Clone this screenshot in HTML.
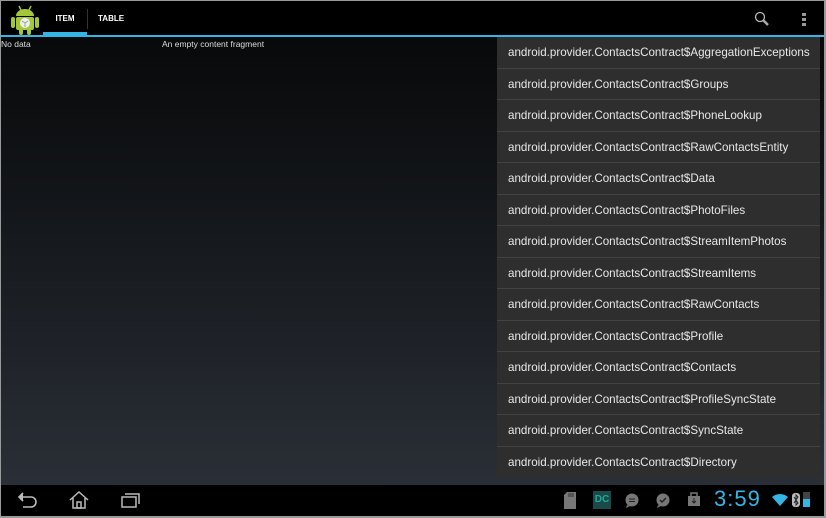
<!DOCTYPE html>
<html><head><style>
*{margin:0;padding:0;box-sizing:border-box}
body{width:826px;height:518px;background:#9a9a9a;font-family:"Liberation Sans",sans-serif;position:relative;overflow:hidden}
#scr{position:absolute;left:1px;top:1px;width:823px;height:515px;background:#000;overflow:hidden}
#ab{position:absolute;left:0;top:0;width:823px;height:34px;background:#000}
#line{position:absolute;left:0;top:34px;width:823px;height:2px;background:#33b5e5}
#content{position:absolute;left:0;top:36px;width:823px;height:448px;background:linear-gradient(#08090a,#14171b 40%,#2a2f37)}
#nav{position:absolute;left:0;top:484px;width:823px;height:31px;background:#000}
.tab{position:absolute;top:0;height:34px;color:#fff;font-size:8px;font-weight:bold;line-height:36px}
#menu{position:absolute;left:496px;top:36px;width:323px;background:#2e2e2f}
.it{height:31.5px;border-bottom:1px solid #424243;color:#e8e8e8;font-size:11.6px;line-height:32px;padding-left:11px;white-space:nowrap}
.it:last-child{border-bottom:none}
.sm{position:absolute;color:#ddd;font-size:8.5px;top:38px}
</style></head><body>
<div id="scr">
<div id="ab">
<svg style="position:absolute;left:10px;top:3px" width="28" height="31" viewBox="0 0 28 31">
<line x1="8" y1="2" x2="10" y2="6" stroke="#a4c639" stroke-width="1.5"/><line x1="20" y1="2" x2="18" y2="6" stroke="#a4c639" stroke-width="1.5"/>
<path d="M5 12a9 7 0 0 1 18 0z" fill="#a4c639"/>
<rect x="5" y="13" width="18" height="13" rx="2" fill="#a4c639"/>
<rect x="0" y="13" width="4" height="11" rx="2" fill="#a4c639"/><rect x="24" y="13" width="4" height="11" rx="2" fill="#a4c639"/>
<rect x="8" y="24" width="4" height="7" rx="2" fill="#a4c639"/><rect x="16" y="24" width="4" height="7" rx="2" fill="#a4c639"/>
<circle cx="14" cy="19" r="5" fill="#eee"/><path d="M14 19v4M14 19l-3-2M14 19l3-2" stroke="#8a9" stroke-width="1"/>
</svg>
<div class="tab" style="left:42px;width:44px;text-align:center">ITEM</div>
<div style="position:absolute;left:42px;top:31px;width:44px;height:3px;background:#33b5e5"></div>
<div style="position:absolute;left:86px;top:8px;width:1px;height:20px;background:#333"></div>
<div class="tab" style="left:97px">TABLE</div>
<svg style="position:absolute;left:753px;top:10px" width="18" height="16"><circle cx="6" cy="6" r="4.5" stroke="#bbb" stroke-width="1.3" fill="none"/><line x1="9.5" y1="9.5" x2="14" y2="14" stroke="#aaa" stroke-width="2.5"/></svg>
<div style="position:absolute;left:801px;top:12px;width:4px;height:3px;background:#999;box-shadow:0 5px #999,0 10px #999"></div>
</div>
<div id="line"></div>
<div id="content"></div>
<div class="sm" style="left:0">No data</div>
<div class="sm" style="left:161px">An empty content fragment</div>
<div id="menu">
<div class="it">android.provider.ContactsContract$AggregationExceptions</div>
<div class="it">android.provider.ContactsContract$Groups</div>
<div class="it">android.provider.ContactsContract$PhoneLookup</div>
<div class="it">android.provider.ContactsContract$RawContactsEntity</div>
<div class="it">android.provider.ContactsContract$Data</div>
<div class="it">android.provider.ContactsContract$PhotoFiles</div>
<div class="it">android.provider.ContactsContract$StreamItemPhotos</div>
<div class="it">android.provider.ContactsContract$StreamItems</div>
<div class="it">android.provider.ContactsContract$RawContacts</div>
<div class="it">android.provider.ContactsContract$Profile</div>
<div class="it">android.provider.ContactsContract$Contacts</div>
<div class="it">android.provider.ContactsContract$ProfileSyncState</div>
<div class="it">android.provider.ContactsContract$SyncState</div>
<div class="it">android.provider.ContactsContract$Directory</div>
</div>
<div id="nav">
<svg style="position:absolute;left:16px;top:7px" width="22" height="18" fill="none" stroke="#bbb" stroke-width="1.6"><path d="M3 5h11a5 5 0 0 1 0 10H6"/><path d="M6 1L2 5l4 4" fill="#bbb"/></svg>
<svg style="position:absolute;left:67px;top:5px" width="22" height="20" fill="none" stroke="#bbb" stroke-width="1.5"><path d="M2 10L11 2l9 8M5 8v10h12V8"/><rect x="9" y="12" width="4" height="6"/></svg>
<svg style="position:absolute;left:119px;top:6px" width="22" height="18" fill="none" stroke="#bbb" stroke-width="1.5"><rect x="2" y="6" width="14" height="10"/><path d="M5 3h14v10"/></svg>
<svg style="position:absolute;left:562px;top:7px" width="14" height="17"><path d="M1 3l3-3h9v17H1z" fill="#777"/><path d="M6 1v4M8 1v4M10 1v4" stroke="#333"/></svg>
<div style="position:absolute;left:592px;top:6px;width:18px;height:18px;background:#1a4a4a;color:#2a9;font-size:10px;font-weight:bold;line-height:18px;text-align:center">DC</div>
<svg style="position:absolute;left:624px;top:8px" width="14" height="15"><circle cx="7" cy="7" r="6.5" fill="#777"/><path d="M2 12l-1 3 4-2z" fill="#777"/><path d="M4 6h6M4 8.5h6" stroke="#222"/></svg>
<svg style="position:absolute;left:655px;top:8px" width="14" height="15"><circle cx="7" cy="7" r="6.5" fill="#777"/><path d="M2 12l-1 3 4-2z" fill="#777"/><path d="M4 7l2 2 4-4" stroke="#222" stroke-width="1.5" fill="none"/></svg>
<svg style="position:absolute;left:686px;top:6px" width="14" height="16"><path d="M4 5V2h6v3" stroke="#777" fill="none" stroke-width="1.5"/><rect x="1" y="5" width="12" height="10" fill="#777"/><path d="M7 7v5M5 10l2 2 2-2" stroke="#222" fill="none"/></svg>
<div style="position:absolute;left:713px;top:1px;color:#33b5e5;font-size:22px;letter-spacing:1px;font-weight:300">3:59</div>
<svg style="position:absolute;left:771px;top:8px" width="16" height="14"><path d="M8 13L0 4a12 12 0 0 1 16 0z" fill="#33b5e5"/></svg>
<svg style="position:absolute;left:791px;top:8px" width="8" height="14"><rect width="8" height="14" rx="3" fill="#bbb"/><path d="M2 4l4 6-2 2V2l2 2-4 6" stroke="#222" fill="none"/></svg>
<div style="position:absolute;left:802px;top:7px;width:7px;height:15px;background:#444"><div style="position:absolute;bottom:0;width:7px;height:8px;background:#33b5e5"></div></div>
</div>
</div>
</body></html>
